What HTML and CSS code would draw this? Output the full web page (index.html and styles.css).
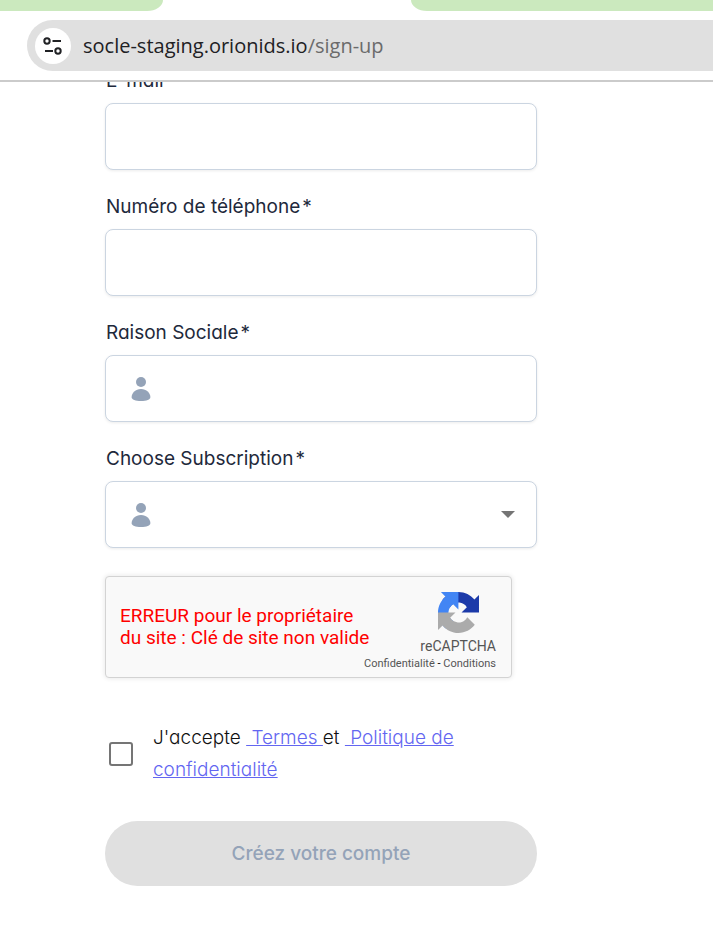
FILE: index.html
```
<!DOCTYPE html>
<html lang="fr">
<head>
    <meta charset="UTF-8">
    <meta name="viewport" content="width=device-width, initial-scale=1.0">
    <title>Créez votre compte</title>
    <link rel="stylesheet" href="styles.css">
</head>
<body>

    <header class="browser">
        <div class="tabs">
            <div class="tab-left"></div>
            <div class="tab-right"></div>
        </div>
        <div class="address-bar">
            <button class="site-info" type="button" aria-label="Informations sur le site">
                <svg width="20" height="20" viewBox="0 0 20 20" fill="none" stroke="#202124" stroke-width="2">
                    <circle cx="4" cy="5" r="2.7"/>
                    <path d="M9.5 5H18M2 15H10"/>
                    <circle cx="15" cy="15" r="2.7"/>
                </svg>
            </button>
            <span class="url">socle-staging.orionids.io<span class="path">/sign-up</span></span>
        </div>
    </header>

    <main>
        <form class="signup">
            <div class="field">
                <label for="email">E-mail<span class="required">*</span></label>
                <input class="control" type="email" id="email">
            </div>
            <div class="field">
                <label for="phone">Numéro de téléphone<span class="required">*</span></label>
                <input class="control" type="tel" id="phone">
            </div>
            <div class="field">
                <label for="company">Raison Sociale<span class="required">*</span></label>
                <div class="control-wrap">
                    <input class="control with-icon" type="text" id="company">
                    <svg class="user-icon" width="20" height="24" viewBox="0 0 20 24" fill="#94a3b8">
                        <circle cx="10" cy="5" r="5"/>
                        <path d="M10 12C4.5 12 .6 16 .6 20.3C.6 22.7 4.5 24 10 24S19.4 22.7 19.4 20.3C19.4 16 15.5 12 10 12Z"/>
                    </svg>
                </div>
            </div>
            <div class="field">
                <label for="subscription">Choose Subscription<span class="required">*</span></label>
                <div class="control-wrap">
                    <select class="control with-icon" id="subscription">
                        <option value=""></option>
                    </select>
                    <svg class="user-icon" width="20" height="24" viewBox="0 0 20 24" fill="#94a3b8">
                        <circle cx="10" cy="5" r="5"/>
                        <path d="M10 12C4.5 12 .6 16 .6 20.3C.6 22.7 4.5 24 10 24S19.4 22.7 19.4 20.3C19.4 16 15.5 12 10 12Z"/>
                    </svg>
                    <svg class="arrow" width="14" height="7" viewBox="0 0 14 7" fill="#757575">
                        <path d="M0 0H14L7 7Z"/>
                    </svg>
                </div>
            </div>

            <div class="captcha">
                <p class="captcha-error">ERREUR pour le propriétaire<br>du site : Clé de site non valide</p>
                <div class="captcha-brand">
                    <svg width="41" height="41" viewBox="0 0 64 64">
                        <path fill="#1c3aa9" d="M64 31.955l-.033-1.37V4.687l-7.16 7.16C50.948 4.674 42.033.093 32.05.093c-10.4 0-19.622 4.96-25.458 12.64l11.736 11.86a15.55 15.55 0 0 1 4.754-5.334c2.05-1.6 4.952-2.906 8.968-2.906.485 0 .86.057 1.135.163 4.976.393 9.288 3.14 11.828 7.124l-8.307 8.307L64 31.953"/>
                        <path fill="#4285f4" d="M31.862.094l-1.37.033H4.594l7.16 7.16C4.58 13.147 0 22.06 0 32.046c0 10.4 4.96 19.622 12.64 25.458L24.5 45.768a15.55 15.55 0 0 1-5.334-4.754c-1.6-2.05-2.906-4.952-2.906-8.968 0-.485.057-.86.163-1.135.393-4.976 3.14-9.288 7.124-11.828l8.307 8.307L31.86.095"/>
                        <path fill="#ababab" d="M.001 32.045l.033 1.37v25.898l7.16-7.16c5.86 7.173 14.774 11.754 24.76 11.754 10.4 0 19.622-4.96 25.458-12.64l-11.736-11.86a15.55 15.55 0 0 1-4.754 5.334c-2.05 1.6-4.952 2.906-8.968 2.906-.485 0-.86-.057-1.135-.163-4.976-.393-9.288-3.14-11.828-7.124l8.307-8.307c-10.522.04-22.4.066-27.295-.005"/>
                    </svg>
                    <span class="captcha-name">reCAPTCHA</span>
                </div>
                <div class="captcha-links">
                    <a href="#">Confidentialité</a> - <a href="#">Conditions</a>
                </div>
            </div>

            <div class="terms">
                <input type="checkbox" id="accept">
                <label for="accept">J'accepte <a href="#">&nbsp;Termes </a>et <a href="#">&nbsp;Politique de confidentialité</a></label>
            </div>

            <button class="submit" type="submit" disabled>Créez votre compte</button>
        </form>
    </main>

</body>
</html>
```
FILE: styles.css
```
:root {
    --tab-color: #cbe9be;
    --bar-color: #e0e0e0;
    --label-color: #1e293b;
    --border-color: #cbd5e1;
    --muted-color: #94a3b8;
    --link-color: #6366f1;
}

* {
    box-sizing: border-box;
}

body {
    margin: 0;
    background-color: #fff;
    color: #111;
    font-family: Inter, 'Liberation Sans', sans-serif;
    font-feature-settings: 'cv11';
    font-size: 19px;
}

/* browser bar */
.browser {
    position: sticky;
    top: 0;
    z-index: 10;
    background-color: #fff;
    border-bottom: 2px solid #cbcbcb;
}

.tabs {
    display: flex;
    justify-content: space-between;
    gap: 248px;
    height: 11px;
}

.tab-left {
    width: 163px;
    background-color: var(--tab-color);
    border-bottom-right-radius: 16px 11px;
}

.tab-right {
    flex: 1;
    background-color: var(--tab-color);
    border-bottom-left-radius: 16px 11px;
}

.address-bar {
    display: flex;
    align-items: center;
    gap: 12px;
    height: 51px;
    margin: 9px 0 9px 27px;
    padding-left: 8px;
    background-color: var(--bar-color);
    border-radius: 26px 0 0 26px;
}

.site-info {
    display: flex;
    align-items: center;
    justify-content: center;
    width: 36px;
    height: 36px;
    padding: 0;
    border: none;
    border-radius: 50%;
    background-color: #fff;
}

.url {
    font-family: 'Open Sans', 'Noto Sans', sans-serif;
    font-size: 20px;
    color: #202124;
}

.path {
    color: #6b6b6b;
}

/* form, scrolled slightly under the bar */
.signup {
    display: flex;
    flex-direction: column;
    width: calc(100% - 210px);
    max-width: 432px;
    margin: -16px 0 48px 105px;
}

.field {
    display: flex;
    flex-direction: column;
    gap: 7px;
    margin-bottom: 22px;
}

.field label {
    padding-left: 1px;
    line-height: 30px;
    color: var(--label-color);
}

.required {
    margin-left: 2px;
}

.control-wrap {
    position: relative;
}

.control {
    display: block;
    width: 100%;
    height: 67px;
    padding: 0 24px;
    border: 1px solid var(--border-color);
    border-radius: 8px;
    background-color: #fff;
    box-shadow: 0 1px 3px rgba(0, 0, 0, 0.08);
    font: inherit;
    color: var(--label-color);
    appearance: none;
}

.with-icon {
    padding-left: 64px;
}

.user-icon {
    position: absolute;
    left: 26px;
    top: 22px;
    pointer-events: none;
}

.arrow {
    position: absolute;
    right: 22px;
    top: 30px;
    pointer-events: none;
}

/* captcha */
.captcha {
    display: grid;
    grid-template-columns: 1fr auto;
    align-content: start;
    width: 407px;
    max-width: 100%;
    height: 102px;
    margin-top: 6px;
    padding: 15px 15px 0 14px;
    border: 1px solid #d3d3d3;
    border-radius: 4px;
    background-color: #f9f9f9;
    box-shadow: 0 0 4px 1px rgba(0, 0, 0, 0.08);
    font-family: Roboto, 'Liberation Sans', sans-serif;
    color: #555;
}

.captcha-error {
    margin: 13px 0 0;
    font-size: 19px;
    line-height: 22px;
    color: #f00;
    white-space: nowrap;
}

.captcha-brand {
    display: flex;
    flex-direction: column;
    align-items: center;
}

.captcha-name {
    margin-top: 4px;
    font-size: 14px;
    line-height: 18px;
}

.captcha-links {
    grid-column: 1 / -1;
    font-size: 11px;
    line-height: 18px;
    text-align: right;
    color: #000;
}

.captcha-links a {
    color: #555;
    text-decoration: none;
}

/* terms */
.terms {
    display: flex;
    align-items: center;
    gap: 20px;
    margin-top: 44px;
    padding-left: 4px;
}

.terms input {
    flex: none;
    width: 24px;
    height: 24px;
    margin: 0;
    border: 2px solid #757575;
    border-radius: 3px;
    background-color: #fff;
    appearance: none;
}

.terms input:checked {
    background-color: var(--link-color);
}

.terms label {
    max-width: 320px;
    font-weight: 300;
    line-height: 32px;
}

.terms a {
    color: var(--link-color);
    text-decoration: underline;
}

.submit {
    height: 65px;
    margin-top: 35px;
    border: none;
    border-radius: 33px;
    background-color: var(--bar-color);
    color: var(--muted-color);
    font: inherit;
    font-weight: 500;
}
```
